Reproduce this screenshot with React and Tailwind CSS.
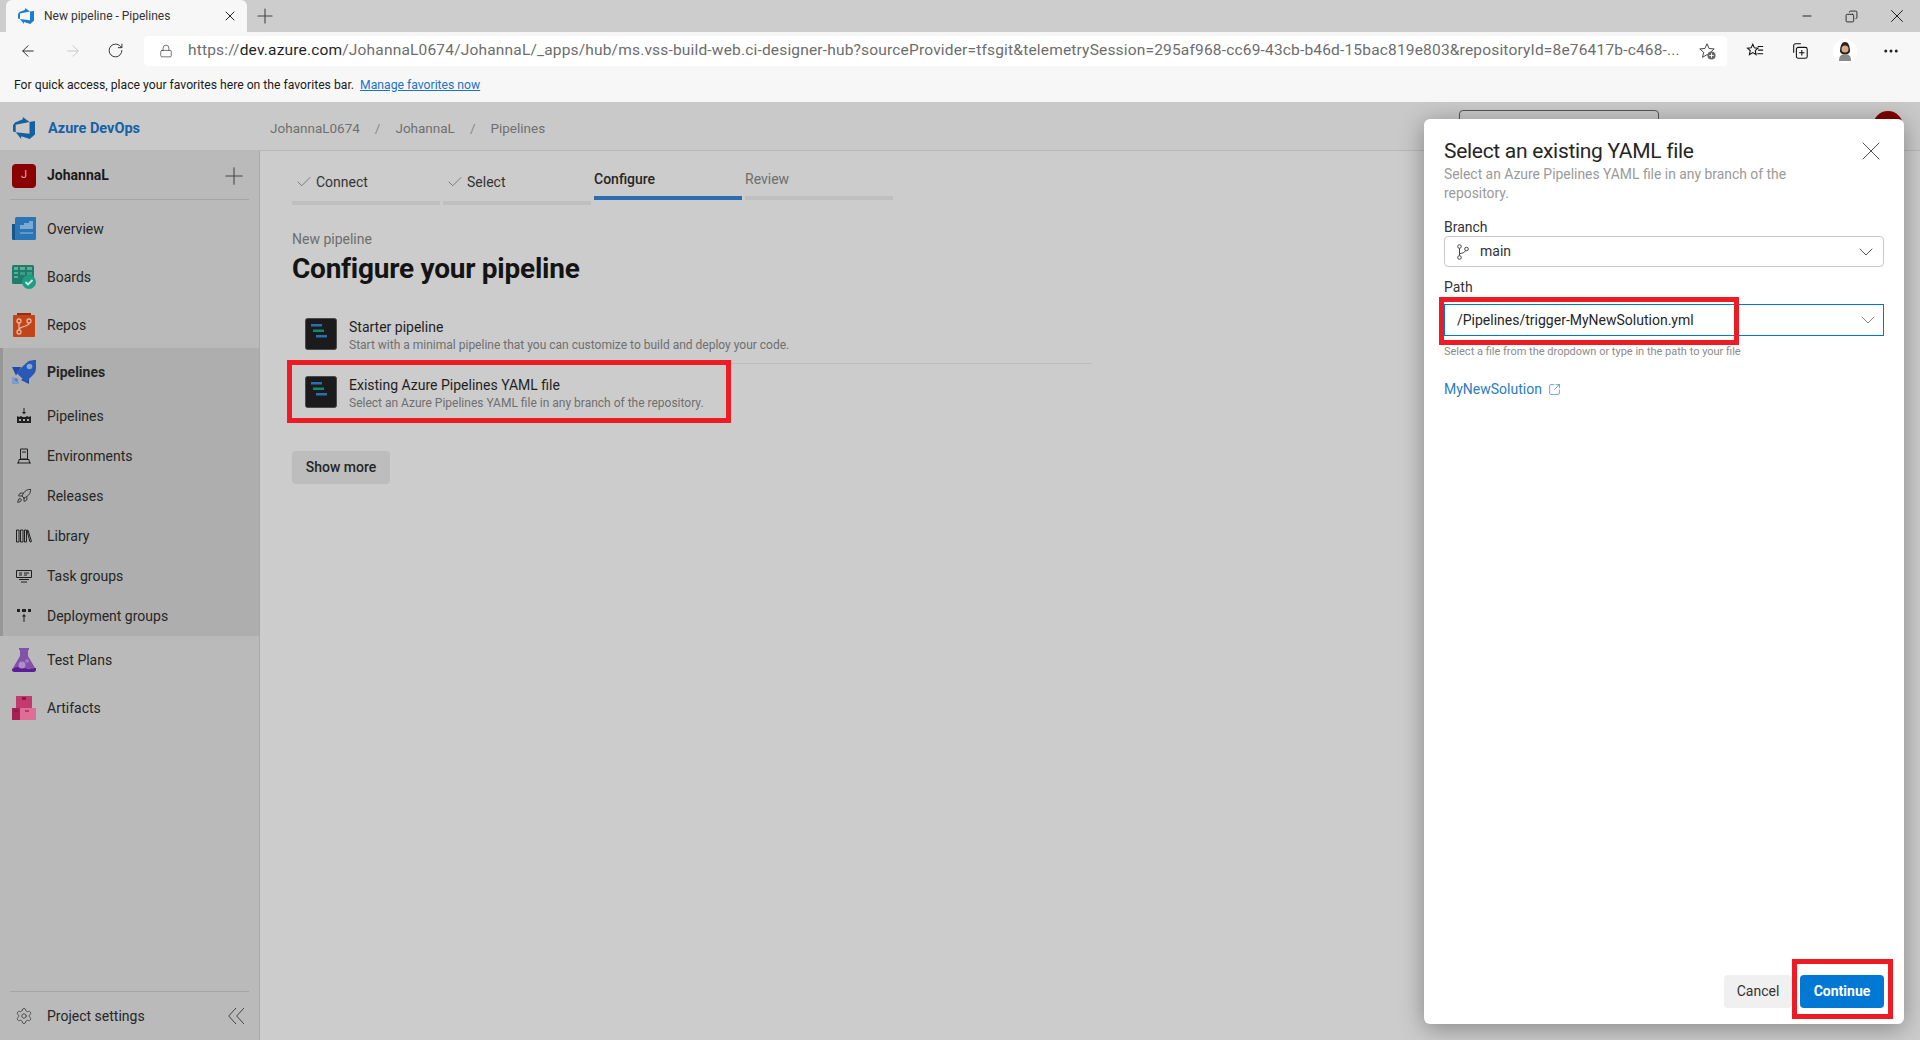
import React from "react";
import {
  ArrowLeft,
  ArrowRight,
  RotateCw,
  Lock,
  Plus,
  X,
  Minus,
  Check,
  ChevronDown,
  Settings,
  Rocket,
  SquareArrowOutUpRight,
  Ellipsis,
  Copy,
} from "lucide-react";

const FONT = { fontFamily: "Roboto, 'Noto Sans', sans-serif" };

const URL_TEXT =
  "/JohannaL0674/JohannaL/_apps/hub/ms.vss-build-web.ci-designer-hub?sourceProvider=tfsgit&telemetrySession=295af968-cc69-43cb-b46d-15bac819e803&repositoryId=8e76417b-c468-...";

function DevOpsLogo({ className, color }) {
  return (
    <svg viewBox="0 0 24 24" className={className}>
      <path
        fill={color}
        d="M0 8.877L2.247 5.91l8.405-3.416V.022l7.37 5.393L2.966 8.338v8.225L0 15.707zm24-4.45v14.651l-5.753 4.9-9.303-3.057v3.056l-5.978-7.416 15.057 1.798V5.415z"
      />
    </svg>
  );
}

function OverviewIcon() {
  return (
    <svg viewBox="0 0 24 24" className="w-6 h-6">
      <path fill="#14568f" d="M0 7h6v16H1.500A1.500 1.500 0 0 1 0 21.500z" />
      <path fill="#2a74b8" d="M3 1.500A1.500 1.500 0 0 1 4.500 0H24v21.500a1.500 1.500 0 0 1-1.500 1.500H3z" />
      <path fill="#7aa9d2" d="M17 4h4v8H8V8h4V6h5z" />
      <path fill="#5f97c9" d="M8 15h13v2H8z" />
    </svg>
  );
}

function BoardsIcon() {
  return (
    <svg viewBox="0 0 24 24" className="w-6 h-6">
      <rect x="0" y="0" width="22" height="19" rx="1.500" fill="#1d7f6b" />
      <path fill="#62ab9b" d="M2 2h4v3H2zM8 2h5v3H8zM15 2h5v3h-5zM2 7h4v2H2zM2 11h4v2H2z" />
      <path fill="#3f9b87" d="M8 7h5v3H8zM15 7h5v3h-5z" />
      <circle cx="17" cy="17" r="7" fill="#1f9d85" />
      <path d="M13.500 17l2.500 2.500 4.500-4.500" fill="none" stroke="#cfe9e2" strokeWidth="1.800" />
    </svg>
  );
}

function ReposIcon() {
  return (
    <svg viewBox="0 0 24 24" className="w-6 h-6">
      <path fill="#93300e" d="M5 0h14v4H5z" />
      <rect x="1" y="2" width="22" height="22" rx="1" fill="#c2451a" />
      <g fill="none" stroke="#e6b7a3" strokeWidth="1.300">
        <circle cx="7" cy="8" r="2" />
        <circle cx="17" cy="8" r="2" />
        <circle cx="7" cy="19" r="2" />
        <path d="M7 10v7M17 10c0 4-10 3-10 7" />
      </g>
    </svg>
  );
}

function PipelinesIcon() {
  return (
    <svg viewBox="0 0 24 24" className="w-6 h-6 shrink-0">
      <path fill="#1f49a6" d="M0 7h9l-5 8.500z" />
      <path fill="#1f49a6" d="M17 24v-9l-8 5z" />
      <path fill="#2a58b5" d="M16 1.500C18 .5 21 0 24 0v8c0 2-.5 4-2 6l-8 8-10-9.500z" />
      <circle cx="17.500" cy="6.500" r="2.800" fill="#8aa5d8" />
      <path fill="#7e9bd4" d="M0 17h2.500v4.500H7V24H0z" />
      <path fill="#5d7fc6" d="M4 17.500l2.500 2.500-2 2-2.500-2.500z" />
    </svg>
  );
}

function FlaskIcon() {
  return (
    <svg viewBox="0 0 24 24" className="w-6 h-6">
      <path fill="#8251a8" d="M7 0h10v2h-1v6l7 12H1L8 8V2H7z" />
      <path fill="#5a1f95" d="M0 21c3-2 6-2 12-1s9 0 12 0v1.500A2.500 2.500 0 0 1 21.500 24h-19A2.500 2.500 0 0 1 0 21.500z" />
      <circle cx="10" cy="17" r="3.500" fill="#b08ccb" />
      <circle cx="15" cy="13" r="1.800" fill="#a47cc2" />
    </svg>
  );
}

function ArtifactsIcon() {
  return (
    <svg viewBox="0 0 24 24" className="w-6 h-6">
      <path fill="#c4396f" d="M4 0h16v12H4z" />
      <path fill="#a81f55" d="M0 12h8v12H0z" />
      <path fill="#de6e98" d="M8 12h16v12H8z" />
      <path fill="#8e1a48" d="M10 1h4v3h-4zM2 14h4v2H2z" />
      <path fill="#b53a6c" d="M13 14h4v2h-4z" />
    </svg>
  );
}

function SmallPipelines() {
  return (
    <svg viewBox="0 0 16 16" className="w-4 h-4" fill="#1f1f1f">
      <path d="M7.500 0h1v4H10L8 6.500 6 4h1.500z" />
      <path d="M1 8l2 1 2-1 1.500 1h3L11 8l2 1 2-1v7H1zm2 3v2h2v-2zm4 0v2h2v-2zm4 0v2h2v-2z" />
    </svg>
  );
}

function SmallEnvironments() {
  return (
    <svg viewBox="0 0 16 16" className="w-4 h-4" fill="none" stroke="#1f1f1f" strokeWidth="1">
      <path d="M4.500 1h7v10h-7zM6 4h4M3 11.500h10M1 15h14M2.500 15l.5-3.500M13.500 15l-.5-3.500" />
    </svg>
  );
}

function SmallLibrary() {
  return (
    <svg viewBox="0 0 16 16" className="w-4 h-4" fill="none" stroke="#1f1f1f" strokeWidth="1">
      <path d="M.5 2h2.500v12H.5zM4.500 2H7v12H4.500zM8.500 2H10.500v12H8.500zM11 2.500l1-.3 3.500 11.300-1.500.5z" />
    </svg>
  );
}

function SmallTaskGroups() {
  return (
    <svg viewBox="0 0 16 16" className="w-4 h-4" fill="none" stroke="#1f1f1f" strokeWidth="1">
      <path d="M.5 2.500h15v7H.5zM3 5h3M3 7h3M8 5h5M8 7h3M3 11.500h10M5 14h6" />
    </svg>
  );
}

function SmallDeployment() {
  return (
    <svg viewBox="0 0 16 16" className="w-4 h-4" fill="#1f1f1f">
      <path d="M1 1h3v3H1zM6 1h4v3H6zM12 1h3v3h-3z" />
      <path d="M8 6l2 2.500H8.500V14h-1V8.500H6z" />
    </svg>
  );
}

function BranchIcon() {
  return (
    <svg viewBox="0 0 12 16" className="w-3 h-4" fill="none" stroke="#444" strokeWidth="1">
      <circle cx="2.500" cy="2.500" r="1.800" />
      <circle cx="2.500" cy="13.500" r="1.800" />
      <circle cx="9.500" cy="5" r="1.800" />
      <path d="M2.500 4.300v7.400M2.500 9.500c3 0 5-1 6.200-3" />
    </svg>
  );
}

function StarAdd() {
  return (
    <svg viewBox="0 0 20 20" className="w-[18px] h-[18px]">
      <path d="M10 2l2.300 5.200 5.700.5-4.300 3.800 1.300 5.500-5-3-5 3 1.300-5.500L2 7.700l5.700-.5z" fill="none" stroke="#333" />
      <circle cx="15" cy="15" r="4.500" fill="#666" />
      <path d="M15 12.500v5M12.500 15h5" stroke="#fff" />
    </svg>
  );
}

function FavoritesIcon() {
  return (
    <svg viewBox="0 0 20 20" className="w-[18px] h-[18px]" fill="none" stroke="#111" strokeWidth="1.200">
      <path d="M7.500 2.500l1.800 4 4 .4-3 2.800.9 4.300-3.700-2.200-3.700 2.200.9-4.300-3-2.800 4-.4z" />
      <path d="M13 5h6M13.500 9h5.500M12.500 13H19" />
    </svg>
  );
}

function CollectionsIcon() {
  return (
    <svg viewBox="0 0 20 20" className="w-[18px] h-[18px]" fill="none" stroke="#111" strokeWidth="1.200">
      <path d="M3 12V4a2 2 0 0 1 2-2h6" />
      <rect x="6" y="6" width="12" height="12" rx="2" />
      <path d="M12 9v6M9 12h6" />
    </svg>
  );
}

function ProfileIcon() {
  return (
    <div className="w-6 h-6 rounded-full bg-white flex items-center justify-center">
      <svg viewBox="0 0 24 24" className="w-6 h-6">
        <path fill="#8a8a8a" d="M6 22c0-5 2-7 6-7s6 2 6 7z" />
        <path fill="#2b211d" d="M7 13c0-7 2-10 5-10s5 3 5 10l-2 2H9z" />
        <circle cx="12" cy="10" r="3.500" fill="#d9a98c" />
      </svg>
    </div>
  );
}

function PipelineTile() {
  return (
    <svg viewBox="0 0 32 32" className="w-8 h-8 shrink-0">
      <rect x="0.500" y="0.500" width="31" height="31" rx="2" fill="#1b1b1b" stroke="#4a4a4a" />
      <path fill="#2a6fb3" d="M6 6h11v2.500H6zM11 17h11v2.500H11z" />
      <path fill="#0f8a6d" d="M8 11.500h11V14H8z" />
    </svg>
  );
}

const TOP_ITEMS = [
  { label: "Overview", icon: OverviewIcon },
  { label: "Boards", icon: BoardsIcon },
  { label: "Repos", icon: ReposIcon },
];

const SUB_ITEMS = [
  { label: "Pipelines", icon: SmallPipelines },
  { label: "Environments", icon: SmallEnvironments },
  { label: "Releases", icon: () => <Rocket className="w-[18px] h-[18px] text-[#1f1f1f]" strokeWidth={1.25} /> },
  { label: "Library", icon: SmallLibrary },
  { label: "Task groups", icon: SmallTaskGroups },
  { label: "Deployment groups", icon: SmallDeployment },
];

const BOTTOM_ITEMS = [
  { label: "Test Plans", icon: FlaskIcon },
  { label: "Artifacts", icon: ArtifactsIcon },
];

function NavRow({ label, icon: Icon }) {
  return (
    <div className="h-12 flex items-center pl-3">
      <div className="w-6 h-6 flex items-center justify-center shrink-0">
        <Icon />
      </div>
      <span className="ml-[11px] text-[14px] text-[#262626]">{label}</span>
    </div>
  );
}

function Sidebar() {
  return (
    <aside className="w-[260px] shrink-0 bg-[#bababa] border-r border-[#a9a9a9] flex flex-col">
      {/* Project */}
      <div className="mx-[10px] h-[49px] border-b border-[#a5a5a5] flex items-center pl-[2px] pr-[1px] pt-[1px]">
        <div className="w-6 h-6 rounded bg-[#8b0000] flex items-center justify-center text-[11px] text-[#d9b0b0]">J</div>
        <span className="ml-[11px] text-[14px] font-bold text-[#1a1a1a]">JohannaL</span>
        <Plus className="ml-auto w-7 h-7 text-[#444]" strokeWidth={0.9} />
      </div>

      {/* Navigation */}
      <nav className="pt-[5px] flex flex-col">
        {TOP_ITEMS.map((item) => (
          <NavRow key={item.label} {...item} />
        ))}
        <div className="h-[288px] -mt-px bg-[#aeaeae] border-l-[3px] border-[#979797]">
          <div className="-ml-[3px]">
            <div className="h-12 flex items-center pl-3">
              <PipelinesIcon />
              <span className="ml-[11px] text-[14px] font-bold text-[#262626]">Pipelines</span>
            </div>
            {SUB_ITEMS.map(({ label, icon: Icon }) => (
              <div key={label} className="h-10 flex items-center pl-4 first:mt-px">
                <div className="w-4 h-4 flex items-center justify-center shrink-0">
                  <Icon />
                </div>
                <span className="ml-[15px] text-[14px] text-[#262626]">{label}</span>
              </div>
            ))}
          </div>
        </div>
        {BOTTOM_ITEMS.map((item) => (
          <NavRow key={item.label} {...item} />
        ))}
      </nav>

      {/* Footer */}
      <div className="mt-auto mx-[10px] border-t border-[#a5a5a5] h-[49px] flex items-center pl-[5px] pr-[5px]">
        <Settings className="w-[18px] h-[18px] text-[#333]" strokeWidth={1} />
        <span className="ml-[14px] text-[14px] text-[#262626]">Project settings</span>
        <svg viewBox="0 0 16 16" className="ml-auto w-4 h-4" fill="none" stroke="#444" strokeWidth="1">
          <path d="M8 0L.7 8 8 16M16 0L8.700 8 16 16" />
        </svg>
      </div>
    </aside>
  );
}

function Step({ label, done, active }) {
  return (
    <div className={`w-[148px] ${done ? "pt-[21px]" : "pt-[18px]"}`}>
      <div className={`h-5 flex items-center text-[14px] ${done ? "pl-[3px]" : ""} ${active ? "font-medium text-[#262626]" : done ? "text-[#333]" : "text-[#6e6e6e]"}`}>
        {done && <Check className="w-[18px] h-[18px] mr-[3px] text-[#555]" strokeWidth={0.9} />}
        {label}
      </div>
      <div className={`h-1 ${done ? "mt-[9px]" : "mt-[7px]"} ${active ? "bg-[#2a6db0]" : "bg-[#bfbfbf]"}`} />
    </div>
  );
}

function PipelineOption({ title, desc, bordered }) {
  return (
    <div className={`w-[800px] pl-[13px] pt-3 flex ${bordered ? "border-b border-[#bdbdbd] pb-[13px]" : "pb-2"}`}>
      <PipelineTile />
      <div className="ml-3 h-8">
        <div className="text-[14px] leading-[18px] text-[#1f1f1f]">{title}</div>
        <div className="text-[12px] leading-4 mt-[1px] text-[#6f6f6f]">{desc}</div>
      </div>
    </div>
  );
}

function Main() {
  return (
    <main className="flex-1 bg-[#cccccc] pl-8">
      <div className="flex gap-[3px]">
        <Step label="Connect" done />
        <Step label="Select" done />
        <Step label="Configure" active />
        <Step label="Review" />
      </div>
      <div className="mt-6 h-5 leading-5 text-[14px] text-[#6e6e6e]">New pipeline</div>
      <h1 className="mt-[2px] h-9 leading-9 text-[28px] font-bold tracking-[-0.25px] text-[#141414]">Configure your pipeline</h1>
      <div className="mt-[19px]">
        <PipelineOption
          bordered
          title="Starter pipeline"
          desc="Start with a minimal pipeline that you can customize to build and deploy your code."
        />
        <PipelineOption
          title="Existing Azure Pipelines YAML file"
          desc="Select an Azure Pipelines YAML file in any branch of the repository."
        />
      </div>
      <button className="mt-[35px] w-[98px] h-[33px] rounded-sm bg-[#bdbdbd] text-[14px] font-medium text-[#262626]">Show more</button>
    </main>
  );
}

function Modal() {
  return (
    <div className="absolute left-[1424px] top-[119px] w-[480px] h-[905px] bg-white rounded-md shadow-[0_4px_24px_rgba(0,0,0,0.35)] flex flex-col pl-5 pr-5 pb-4 pt-[19px]">
      <div className="flex items-center justify-between h-[26px]">
        <span className="text-[21px] leading-[26px] tracking-[-0.3px] text-[#262626]">Select an existing YAML file</span>
        <X className="w-8 h-8 -mr-[3px] text-[#444]" strokeWidth={0.7} />
      </div>
      <p className="w-[400px] text-[13.9px] leading-[19px] text-[#9a9a9a] mt-[1px]">
        Select an Azure Pipelines YAML file in any branch of the repository.
      </p>

      <div className="mt-[14px] h-5 leading-5 text-[14px] text-[#333]">Branch</div>
      <div className="-mt-px h-[31px] border border-[#c8c8c8] rounded-sm flex items-center pl-3 pr-[5px]">
        <BranchIcon />
        <span className="ml-[11px] text-[14px] text-[#333]">main</span>
        <ChevronDown className="ml-auto w-6 h-6 text-[#555]" strokeWidth={1} />
      </div>

      <div className="mt-[10px] h-5 leading-5 text-[14px] text-[#333]">Path</div>
      <div className="mt-[7px] h-8 border border-[#0078d4] flex items-center pl-3 pr-[3px]">
        <span className="text-[14px] text-[#262626]">/Pipelines/trigger-MyNewSolution.yml</span>
        <ChevronDown className="ml-auto w-6 h-6 text-[#888]" strokeWidth={1} />
      </div>
      <div className="mt-2 h-4 leading-4 text-[11px] text-[#8c8c8c]">Select a file from the dropdown or type in the path to your file</div>

      <div className="mt-[19px] h-5 flex items-center text-[14px] text-[#2b7cbf]">
        MyNewSolution
        <SquareArrowOutUpRight className="ml-[6px] w-[13px] h-[13px]" strokeWidth={1.25} />
      </div>

      <div className="mt-auto flex justify-end gap-2">
        <button className="w-[68px] h-[33px] rounded-sm bg-[#f0f0f0] text-[14px] text-[#333]">Cancel</button>
        <button className="w-[84px] h-[33px] rounded-sm bg-[#0078d4] text-[14px] font-bold text-white">Continue</button>
      </div>
    </div>
  );
}

export default function App() {
  return (
    <div className="relative w-[1920px] h-[1040px] overflow-hidden flex flex-col bg-[#cccccc]" style={FONT}>
      {/* Tab strip */}
      <div className="h-8 shrink-0 bg-[#cdcdcd] flex items-end pl-[6px]">
        <div className="w-[241px] h-8 bg-[#f7f7f7] rounded-t-md flex items-center pl-3 pr-[9px]">
          <DevOpsLogo className="w-4 h-4" color="#1b7fd1" />
          <span className="ml-[10px] text-[12px] text-[#333]">New pipeline - Pipelines</span>
          <X className="ml-auto w-4 h-4 text-[#222]" strokeWidth={1.5} />
        </div>
        <div className="h-8 flex items-center ml-[6px]">
          <Plus className="w-6 h-6 text-[#444]" strokeWidth={1.1} />
        </div>
        <div className="ml-auto h-8 flex items-center text-[#111]">
          <Minus className="w-[14px] h-[14px] mr-[31px]" strokeWidth={1.5} />
          <Copy className="w-[13px] h-[13px] mr-[28px] -scale-x-100" strokeWidth={1.5} />
          <X className="w-[22px] h-[22px] mr-[12px]" strokeWidth={1} />
        </div>
      </div>

      {/* Toolbar */}
      <div className="h-[38px] shrink-0 bg-[#f7f7f7] flex items-center pb-[1px]">
        <ArrowLeft className="ml-[19px] w-[18px] h-[18px] text-[#222]" strokeWidth={1.25} />
        <ArrowRight className="ml-[27px] w-[18px] h-[18px] text-[#c4c4c4]" strokeWidth={1.25} />
        <RotateCw className="ml-[25px] w-[17px] h-[17px] text-[#222]" strokeWidth={1.25} />
        <div className="ml-[20px] w-[1583px] h-[30px] bg-white rounded flex items-center pl-[15px]">
          <Lock className="w-[14px] h-[14px] text-[#444]" strokeWidth={1.25} />
          <span className="ml-[15px] text-[15.5px] whitespace-nowrap tracking-[0.18px] text-[#6d6d6d]">
            https://<span className="text-[#1f1f1f]">dev.azure.com</span>
            {URL_TEXT}
          </span>
          <div className="ml-auto mr-[11px]">
            <StarAdd />
          </div>
        </div>
        <div className="ml-[19px] w-[18px]">
          <FavoritesIcon />
        </div>
        <div className="ml-[27px] w-[18px]">
          <CollectionsIcon />
        </div>
        <div className="ml-[24px]">
          <ProfileIcon />
        </div>
        <Ellipsis className="ml-[25px] w-[18px] h-[18px] text-[#222]" strokeWidth={2} />
      </div>

      {/* Favorites bar */}
      <div className="h-8 shrink-0 bg-[#f7f7f7] flex items-center pl-[14px] pb-[2px] text-[12.2px]">
        <span className="text-[#1a1a1a]">For quick access, place your favorites here on the favorites bar.</span>
        <span className="ml-[6px] text-[#1a73c8] underline">Manage favorites now</span>
      </div>

      {/* Page header */}
      <header className="h-[49px] shrink-0 bg-[#c9c9c9] border-b border-[#b8b8b8] flex items-center pt-1">
        <DevOpsLogo className="ml-[13px] w-[22px] h-[22px]" color="#15609e" />
        <span className="ml-[13px] mt-[1px] text-[14.5px] font-bold text-[#1462a6]">Azure DevOps</span>
        <div className="ml-[130px] flex items-center text-[13.5px] text-[#707070]">
          <span>JohannaL0674</span>
          <span className="mx-[15px] text-[#8a8a8a]">/</span>
          <span>JohannaL</span>
          <span className="mx-[15px] text-[#8a8a8a]">/</span>
          <span>Pipelines</span>
        </div>
        <div className="ml-auto -mt-1 w-[200px] h-8 border border-[#555] rounded-sm mr-[214px]" />
        <div className="-mt-1 w-[30px] h-[30px] rounded-full bg-[#7f0000] mr-[17px]" />
      </header>

      <div className="flex-1 flex min-h-0">
        <Sidebar />
        <Main />
      </div>

      <Modal />

      {/* Red annotation boxes */}
      <div className="absolute left-[287px] top-[360px] w-[444px] h-[63px] border-[5px] border-[#ed1c24]" />
      <div className="absolute left-[1439px] top-[297px] w-[300px] h-[48px] border-[5px] border-[#ed1c24]" />
      <div className="absolute left-[1792px] top-[959px] w-[101px] h-[60px] border-[5px] border-[#ed1c24]" />
    </div>
  );
}
